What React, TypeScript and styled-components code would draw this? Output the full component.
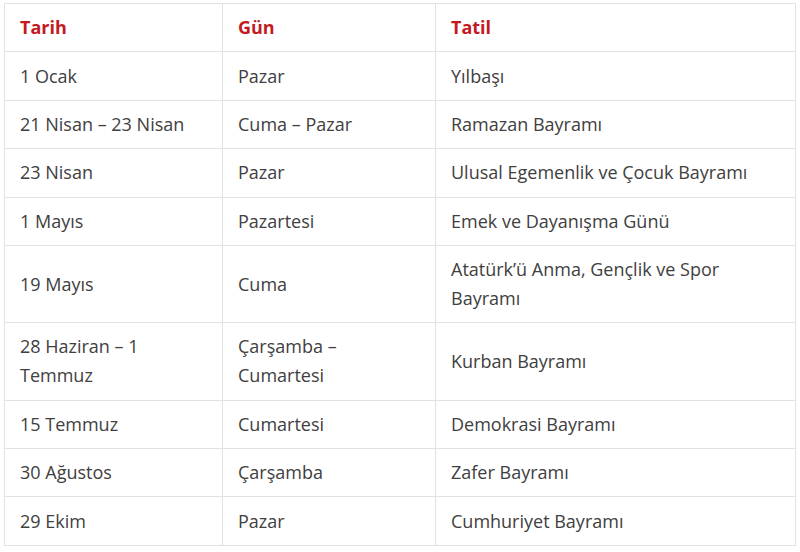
import React from "react";
import styled, { createGlobalStyle } from "styled-components";

interface IHoliday {
  date: string;
  day: string;
  name: string;
}

const holidays: IHoliday[] = [
  { date: "1 Ocak", day: "Pazar", name: "Yılbaşı" },
  { date: "21 Nisan – 23 Nisan", day: "Cuma – Pazar", name: "Ramazan Bayramı" },
  { date: "23 Nisan", day: "Pazar", name: "Ulusal Egemenlik ve Çocuk Bayramı" },
  { date: "1 Mayıs", day: "Pazartesi", name: "Emek ve Dayanışma Günü" },
  { date: "19 Mayıs", day: "Cuma", name: "Atatürk’ü Anma, Gençlik ve Spor Bayramı" },
  { date: "28 Haziran – 1 Temmuz", day: "Çarşamba – Cumartesi", name: "Kurban Bayramı" },
  { date: "15 Temmuz", day: "Cumartesi", name: "Demokrasi Bayramı" },
  { date: "30 Ağustos", day: "Çarşamba", name: "Zafer Bayramı" },
  { date: "29 Ekim", day: "Pazar", name: "Cumhuriyet Bayramı" },
];

function App(): React.ReactElement {
  return (
    <>
      <GlobalStyle />
      <Wrapper>
        <Table>
          <colgroup>
            <col style={{ width: 218 }} />
            <col style={{ width: 213 }} />
            <col />
          </colgroup>
          <thead>
            <tr>
              <HeadCell>Tarih</HeadCell>
              <HeadCell>Gün</HeadCell>
              <HeadCell>Tatil</HeadCell>
            </tr>
          </thead>
          <tbody>
            {holidays.map(h => (
              <tr key={h.date}>
                <Cell>{h.date}</Cell>
                <Cell>{h.day}</Cell>
                <Cell>{h.name}</Cell>
              </tr>
            ))}
          </tbody>
        </Table>
      </Wrapper>
    </>
  );
}

export default App;

const GlobalStyle = createGlobalStyle`
  html, body {
    margin: 0;
    padding: 0;
    background: #ffffff;
  }
`;

const Wrapper = styled.div`
  padding: 3px 4px 0 4px;
  font-family: "Open Sans", "Noto Sans", sans-serif;
`;

const Table = styled.table`
  width: 792px;
  border-collapse: collapse;
  table-layout: fixed;
  border: 1px solid #dcdcdc;
`;

const HeadCell = styled.th`
  text-align: left;
  font-weight: 700;
  font-size: 18px;
  line-height: 29px;
  color: #c41a1f;
  padding: 9.2px 15px;
  border: 1px solid #e2e2e2;
`;

const Cell = styled.td`
  font-size: 18px;
  line-height: 29px;
  color: #404040;
  padding: 9.2px 15px;
  border: 1px solid #e2e2e2;
  vertical-align: middle;
`;
